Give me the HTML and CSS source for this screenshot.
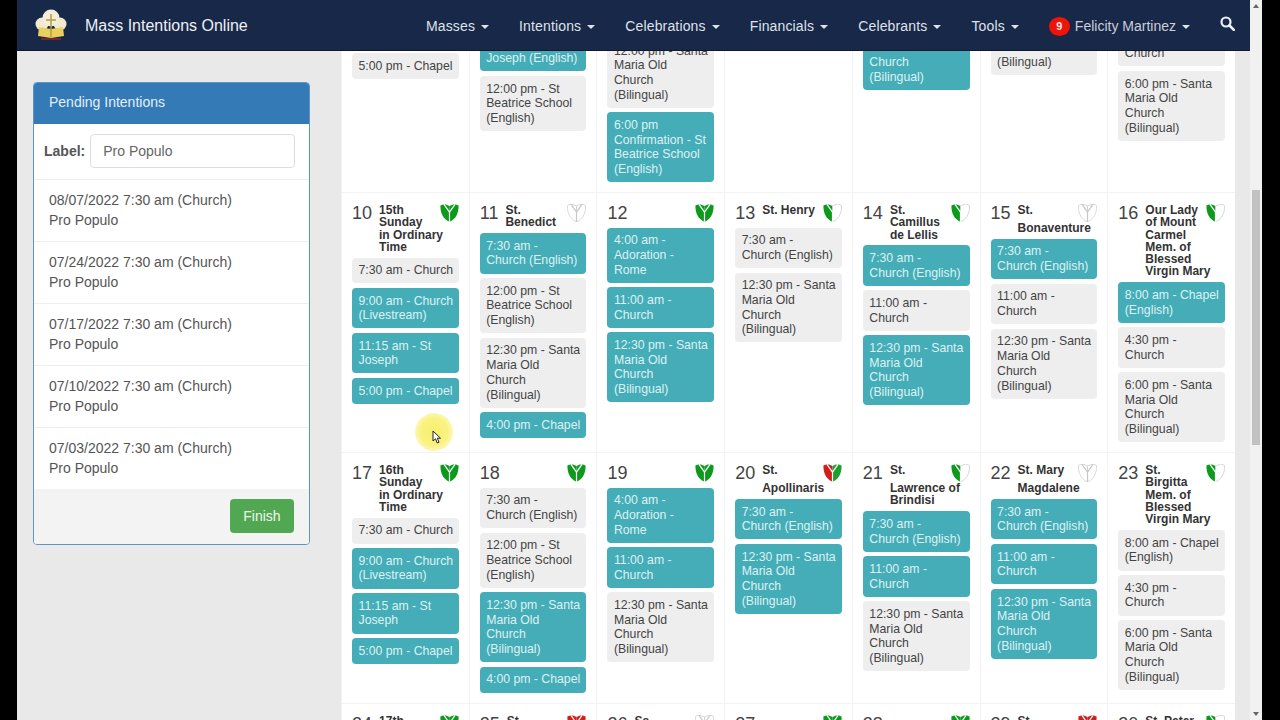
FILE: index.html
```html
<!DOCTYPE html>
<html lang="en">
<head>
    <meta charset="UTF-8">
    <title>Mass Intentions Online</title>
    <link rel="stylesheet" href="styles.css">
</head>
<body>

    <svg class="defs" width="0" height="0">
        <symbol id="vest" viewBox="0 0 19 18">
            <path class="vest-left" d="M9.500 2L6 .6C4 .2 2 .4.400 1.600.200 9.500 3.500 15.500 9.500 17.800z"/>
            <path class="vest-right" d="M9.500 2L13 .6c2-.4 4-.2 5.600 1 .2 7.900-3.100 13.900-9.100 16.200z"/>
            <path class="vest-line" d="M4 .4l5.500 7.800L15 .4M9.500 8.200v9.600"/>
        </symbol>
    </svg>

    <div class="page">
        <!-- Navbar -->
        <header class="navbar">
            <svg class="logo" viewBox="0 0 32 32">
                <circle cx="7" cy="15" r="6.500" fill="#f1ead0"/>
                <circle cx="25" cy="15" r="6.500" fill="#f1ead0"/>
                <circle cx="16" cy="9" r="8.500" fill="#f4eed8"/>
                <path d="M4 18l12 2 12-2 1 9-13 2-13-2z" fill="#e9cf5e"/>
                <path d="M16 5v23M11 11h10" stroke="#b89a45" stroke-width="1.500"/>
                <path d="M6 30h20" stroke="#8e2a2a" stroke-width="1.500"/>
            </svg>
            <div class="brand">Mass Intentions Online</div>
            <nav class="nav-links">
                <a href="#">Masses<span class="caret"></span></a>
                <a href="#">Intentions<span class="caret"></span></a>
                <a href="#">Celebrations<span class="caret"></span></a>
                <a href="#">Financials<span class="caret"></span></a>
                <a href="#">Celebrants<span class="caret"></span></a>
                <a href="#">Tools<span class="caret"></span></a>
                <a href="#" class="user-link"><span class="badge">9</span>Felicity Martinez<span class="caret"></span></a>
            </nav>
            <svg class="search" viewBox="0 0 15 15">
                <circle cx="6" cy="6" r="4.500" fill="none" stroke="#eef0f4" stroke-width="2.200"/>
                <path d="M9.500 9.500l4.300 4.300" stroke="#eef0f4" stroke-width="2.600" stroke-linecap="round"/>
            </svg>
        </header>

        <div class="main">
            <!-- Pending Intentions -->
            <aside class="sidebar">
                <div class="panel">
                    <div class="panel-heading">Pending Intentions</div>
                    <div class="label-row">
                        <label>Label:</label>
                        <input type="text" value="Pro Populo">
                    </div>
                    <div class="intention">08/07/2022 7:30 am (Church)<br>Pro Populo</div>
                    <div class="intention">07/24/2022 7:30 am (Church)<br>Pro Populo</div>
                    <div class="intention">07/17/2022 7:30 am (Church)<br>Pro Populo</div>
                    <div class="intention">07/10/2022 7:30 am (Church)<br>Pro Populo</div>
                    <div class="intention">07/03/2022 7:30 am (Church)<br>Pro Populo</div>
                    <div class="panel-footer">
                        <button class="btn-finish">Finish</button>
                    </div>
                </div>
            </aside>

            <!-- Calendar -->
            <div class="calendar">
                <!-- Week scrolled under the navbar -->
                <div class="day day-cut start-53">
                    <div class="event grey">5:00 pm - Chapel</div>
                </div>
                <div class="day day-cut start-31">
                    <div class="event teal">11:15 am - St<br>Joseph&nbsp;(English)</div>
                    <div class="event grey">12:00 pm - St Beatrice School (English)</div>
                </div>
                <div class="day day-cut start-38">
                    <div class="event grey">12:00 pm - Santa Maria Old<br>Church (Bilingual)</div>
                    <div class="event teal">6:00 pm<br>Confirmation - St Beatrice School (English)</div>
                </div>
                <div class="day day-cut"></div>
                <div class="day day-cut start-20">
                    <div class="event teal">12:30 pm - Santa Maria Old<br>Church (Bilingual)</div>
                </div>
                <div class="day day-cut start-5">
                    <div class="event grey">12:30 pm - Santa Maria Old<br>Church (Bilingual)</div>
                </div>
                <div class="day day-cut start-26">
                    <div class="event grey">4:30 pm -<br>Church</div>
                    <div class="event grey">6:00 pm - Santa Maria Old<br>Church (Bilingual)</div>
                </div>

                <!-- Week of the 10th -->
                <div class="day">
                    <div class="day-head"><span class="num">10</span><div class="title"><svg class="vest green"><use href="#vest"/></svg>15th Sunday in Ordinary Time</div></div>
                    <div class="event grey">7:30 am - Church</div>
                    <div class="event teal">9:00 am - Church (Livestream)</div>
                    <div class="event teal">11:15 am - St Joseph</div>
                    <div class="event teal">5:00 pm - Chapel</div>
                </div>
                <div class="day">
                    <div class="day-head"><span class="num">11</span><div class="title"><svg class="vest white"><use href="#vest"/></svg>St. Benedict</div></div>
                    <div class="event teal">7:30 am -<br>Church&nbsp;(English)</div>
                    <div class="event grey">12:00 pm - St Beatrice School (English)</div>
                    <div class="event grey">12:30 pm - Santa Maria Old<br>Church (Bilingual)</div>
                    <div class="event teal">4:00 pm - Chapel</div>
                </div>
                <div class="day">
                    <div class="day-head"><span class="num">12</span><div class="title"><svg class="vest green"><use href="#vest"/></svg></div></div>
                    <div class="event teal">4:00 am -<br>Adoration -<br>Rome</div>
                    <div class="event teal">11:00 am - Church</div>
                    <div class="event teal">12:30 pm - Santa Maria Old<br>Church (Bilingual)</div>
                </div>
                <div class="day">
                    <div class="day-head"><span class="num">13</span><div class="title"><svg class="vest half"><use href="#vest"/></svg>St. Henry</div></div>
                    <div class="event grey">7:30 am -<br>Church&nbsp;(English)</div>
                    <div class="event grey">12:30 pm - Santa Maria Old<br>Church (Bilingual)</div>
                </div>
                <div class="day">
                    <div class="day-head"><span class="num">14</span><div class="title"><svg class="vest half"><use href="#vest"/></svg>St. Camillus de Lellis</div></div>
                    <div class="event teal">7:30 am -<br>Church&nbsp;(English)</div>
                    <div class="event grey">11:00 am - Church</div>
                    <div class="event teal">12:30 pm - Santa Maria Old<br>Church (Bilingual)</div>
                </div>
                <div class="day">
                    <div class="day-head"><span class="num">15</span><div class="title"><svg class="vest white"><use href="#vest"/></svg>St. Bonaventure</div></div>
                    <div class="event teal">7:30 am -<br>Church&nbsp;(English)</div>
                    <div class="event grey">11:00 am - Church</div>
                    <div class="event grey">12:30 pm - Santa Maria Old<br>Church (Bilingual)</div>
                </div>
                <div class="day">
                    <div class="day-head"><span class="num">16</span><div class="title"><svg class="vest half"><use href="#vest"/></svg>Our Lady of Mount Carmel Mem. of Blessed Virgin Mary</div></div>
                    <div class="event teal">8:00 am - Chapel (English)</div>
                    <div class="event grey">4:30 pm -<br>Church</div>
                    <div class="event grey">6:00 pm - Santa Maria Old<br>Church (Bilingual)</div>
                </div>

                <!-- Week of the 17th -->
                <div class="day">
                    <div class="day-head"><span class="num">17</span><div class="title"><svg class="vest green"><use href="#vest"/></svg>16th Sunday in Ordinary Time</div></div>
                    <div class="event grey">7:30 am - Church</div>
                    <div class="event teal">9:00 am - Church (Livestream)</div>
                    <div class="event teal">11:15 am - St Joseph</div>
                    <div class="event teal">5:00 pm - Chapel</div>
                </div>
                <div class="day">
                    <div class="day-head"><span class="num">18</span><div class="title"><svg class="vest green"><use href="#vest"/></svg></div></div>
                    <div class="event grey">7:30 am -<br>Church&nbsp;(English)</div>
                    <div class="event grey">12:00 pm - St Beatrice School (English)</div>
                    <div class="event teal">12:30 pm - Santa Maria Old<br>Church (Bilingual)</div>
                    <div class="event teal">4:00 pm - Chapel</div>
                </div>
                <div class="day">
                    <div class="day-head"><span class="num">19</span><div class="title"><svg class="vest green"><use href="#vest"/></svg></div></div>
                    <div class="event teal">4:00 am -<br>Adoration -<br>Rome</div>
                    <div class="event teal">11:00 am - Church</div>
                    <div class="event grey">12:30 pm - Santa Maria Old<br>Church (Bilingual)</div>
                </div>
                <div class="day">
                    <div class="day-head"><span class="num">20</span><div class="title"><svg class="vest redgreen"><use href="#vest"/></svg>St. Apollinaris</div></div>
                    <div class="event teal">7:30 am -<br>Church&nbsp;(English)</div>
                    <div class="event teal">12:30 pm - Santa Maria Old<br>Church (Bilingual)</div>
                </div>
                <div class="day">
                    <div class="day-head"><span class="num">21</span><div class="title"><svg class="vest half"><use href="#vest"/></svg>St. Lawrence of Brindisi</div></div>
                    <div class="event teal">7:30 am -<br>Church&nbsp;(English)</div>
                    <div class="event teal">11:00 am - Church</div>
                    <div class="event grey">12:30 pm - Santa Maria Old<br>Church (Bilingual)</div>
                </div>
                <div class="day">
                    <div class="day-head"><span class="num">22</span><div class="title"><svg class="vest white"><use href="#vest"/></svg>St. Mary Magdalene</div></div>
                    <div class="event teal">7:30 am -<br>Church&nbsp;(English)</div>
                    <div class="event teal">11:00 am - Church</div>
                    <div class="event teal">12:30 pm - Santa Maria Old<br>Church (Bilingual)</div>
                </div>
                <div class="day">
                    <div class="day-head"><span class="num">23</span><div class="title"><svg class="vest half"><use href="#vest"/></svg>St. Birgitta Mem. of Blessed Virgin Mary</div></div>
                    <div class="event grey">8:00 am - Chapel (English)</div>
                    <div class="event grey">4:30 pm -<br>Church</div>
                    <div class="event grey">6:00 pm - Santa Maria Old<br>Church (Bilingual)</div>
                </div>

                <!-- Week of the 24th, only its first line shows -->
                <div class="day">
                    <div class="day-head"><span class="num">24</span><div class="title"><svg class="vest green"><use href="#vest"/></svg>17th Sunday in Ordinary Time</div></div>
                </div>
                <div class="day">
                    <div class="day-head"><span class="num">25</span><div class="title"><svg class="vest red"><use href="#vest"/></svg>St. James</div></div>
                </div>
                <div class="day">
                    <div class="day-head"><span class="num">26</span><div class="title"><svg class="vest white"><use href="#vest"/></svg>Ss. Joachim and Anne</div></div>
                </div>
                <div class="day">
                    <div class="day-head"><span class="num">27</span><div class="title"><svg class="vest green"><use href="#vest"/></svg></div></div>
                </div>
                <div class="day">
                    <div class="day-head"><span class="num">28</span><div class="title"><svg class="vest green"><use href="#vest"/></svg></div></div>
                </div>
                <div class="day">
                    <div class="day-head"><span class="num">29</span><div class="title"><svg class="vest red"><use href="#vest"/></svg>St. Martha</div></div>
                </div>
                <div class="day">
                    <div class="day-head"><span class="num">30</span><div class="title"><svg class="vest half"><use href="#vest"/></svg>St. Peter Chrysologus</div></div>
                </div>
            </div>
        </div>

        <!-- Mouse highlight from the screen recording -->
        <div class="mouse-glow">
            <svg class="mouse-arrow" viewBox="0 0 10 14">
                <path d="M1 1v10l2.500-2.200L5.200 13l1.800-.8-1.700-4H8.500z" fill="#fff" stroke="#222" stroke-width="1"/>
            </svg>
        </div>
    </div>

    <div class="scrollbar">
        <span class="arrow-up"></span>
        <div class="thumb"></div>
        <span class="arrow-down"></span>
    </div>

</body>
</html>
```

FILE: styles.css
```css
/* Reset and Basic Styles */
* {
    margin: 0;
    padding: 0;
    box-sizing: border-box;
}
html, body {
    height: 720px;
    overflow: hidden;
}
body {
    font-family: "Liberation Sans", Arial, sans-serif;
    font-size: 14px;
    background-color: #000;
    color: #555;
    display: flex;
    padding: 0 18px 0 17px;
}
.defs {
    position: absolute;
}

.page {
    position: relative;
    width: 1233px;
    height: 720px;
    background-color: #e9e9e9;
    overflow: hidden;
}

/* Navbar */
.navbar {
    position: absolute;
    top: 0;
    left: 0;
    width: 100%;
    height: 51px;
    display: flex;
    align-items: center;
    padding: 2px 15px 0 18px;
    background-color: #182848;
    border-bottom: 1px solid #10192b;
    z-index: 10;
}
.logo {
    width: 32px;
    height: 32px;
    margin-top: -3px;
}
.brand {
    margin-left: 18px;
    font-size: 16px;
    color: #eef0f4;
}
.nav-links {
    display: flex;
    margin-left: auto;
}
.nav-links a {
    display: flex;
    align-items: center;
    padding: 0 15px;
    color: #dfe2e8;
    letter-spacing: .15px;
    text-decoration: none;
    white-space: nowrap;
}
.caret {
    width: 0;
    height: 0;
    margin-left: 6px;
    margin-top: 2px;
    border-top: 4px solid #dfe2e8;
    border-left: 4px solid transparent;
    border-right: 4px solid transparent;
}
.badge {
    width: 21px;
    height: 19px;
    margin-right: 5px;
    border-radius: 50%;
    background-color: #f01408;
    color: #f4e8e8;
    font-size: 11px;
    font-weight: bold;
    line-height: 19px;
    text-align: center;
}
.nav-links .user-link {
    color: #c9ced8;
    letter-spacing: 0;
}
.search {
    width: 15px;
    height: 15px;
    margin-left: 15px;
    margin-bottom: 5px;
}

/* Layout */
.main {
    display: flex;
    align-items: flex-start;
}
.sidebar {
    width: 324px;
    padding: 82px 31px 0 16px;
}

/* Pending panel */
.panel {
    background-color: #fff;
    border: 1px solid #5f95c4;
    border-radius: 4px;
    overflow: hidden;
}
.panel-heading {
    height: 41px;
    padding: 0 15px;
    line-height: 39px;
    background-color: #337ab7;
    color: #e6eff7;
}
.label-row {
    display: flex;
    align-items: center;
    gap: 5px;
    height: 55px;
    padding: 0 14px 2px 10px;
}
.label-row label {
    font-weight: bold;
}
.label-row input {
    flex: 1;
    min-width: 0;
    height: 34px;
    padding: 0 12px;
    border: 1px solid #ddd;
    border-radius: 4px;
    font-family: inherit;
    font-size: 14px;
    color: #666;
}
.intention {
    padding: 10px 15px 11px;
    line-height: 20px;
    border-top: 1px solid #eee;
}
.panel-footer {
    display: flex;
    justify-content: flex-end;
    height: 55px;
    padding: 10px 15px 0;
    background-color: #f3f3f3;
}
.btn-finish {
    width: 64px;
    height: 34px;
    border: none;
    border-radius: 4px;
    background-color: #52a852;
    color: #eef7ee;
    font-family: inherit;
    font-size: 14px;
}

/* Calendar */
.calendar {
    width: 894px;
    display: grid;
    grid-template-columns: repeat(7, 1fr);
    background-color: #fff;
}
.day {
    display: flex;
    flex-direction: column;
    gap: 4.600px;
    min-width: 0;
    padding: 10px;
    border-left: 1px solid #f3f3f3;
    border-bottom: 1px solid #f3f3f3;
}
.day-cut {
    height: 193px;
    padding-top: 0;
}
.start-5 { padding-top: 5px; }
.start-20 { padding-top: 20px; }
.start-26 { padding-top: 26px; }
.start-31 { padding-top: 31px; }
.start-38 { padding-top: 38px; }
.start-53 { padding-top: 53px; }

.day-head {
    display: flex;
    gap: 7px;
    min-height: 20px;
}
.num {
    font-size: 18px;
    line-height: 20px;
    color: #444;
}
.title {
    flex: 1;
    min-width: 0;
    padding: 1px 6px 0 0;
    font-size: 12px;
    font-weight: bold;
    line-height: 12.300px;
    color: #333;
}
/* icon hangs into the title's right padding */
.vest {
    float: right;
    width: 19px;
    height: 18px;
    margin: 0 -6px 0 7px;
}
.vest-left {
    fill: var(--left);
    stroke: var(--edge-left, none);
    stroke-width: .7;
}
.vest-right {
    fill: var(--right);
    stroke: var(--edge-right, none);
    stroke-width: .7;
}
.vest-line {
    fill: none;
    stroke: var(--line, #fff);
    stroke-width: 1.200;
}
.green { --left: #0c9a1c; --right: #0c9a1c; }
.red { --left: #d0201c; --right: #d0201c; }
.redgreen { --left: #d0201c; --right: #1f9e2c; }
.half { --left: #0c9a1c; --right: #fff; --edge-right: #c4c4c4; }
.white { --left: #fff; --right: #fff; --edge-left: #c8c8c8; --edge-right: #c8c8c8; --line: #c8c8c8; }

.event {
    padding: 5.500px 4.500px 5.500px 6.500px;
    border-radius: 4px;
    font-size: 12.250px;
    line-height: 14.700px;
}
.teal {
    background-color: #45adb8;
    color: #def1f3;
}
.grey {
    background-color: #eee;
    color: #444;
}

/* Mouse highlight */
.mouse-glow {
    position: absolute;
    left: 398px;
    top: 413px;
    width: 38px;
    height: 38px;
    border-radius: 50%;
    background: radial-gradient(circle, #f8f06c 0, #f9f280 50%, rgba(251, 245, 160, 0) 100%);
}
.mouse-arrow {
    position: absolute;
    left: 17px;
    top: 17px;
    width: 10px;
    height: 14px;
}

/* Scrollbar */
.scrollbar {
    position: relative;
    width: 12px;
    height: 720px;
    background-color: #f1f1f1;
    display: flex;
    flex-direction: column;
    align-items: center;
    padding-top: 4px;
}
.arrow-up {
    width: 0;
    height: 0;
    border-bottom: 4px solid #666;
    border-left: 3px solid transparent;
    border-right: 3px solid transparent;
}
.thumb {
    width: 8px;
    height: 255px;
    margin-top: 182px;
    background-color: #c1c1c1;
}
.arrow-down {
    width: 0;
    height: 0;
    margin-top: auto;
    margin-bottom: 4px;
    border-top: 4px solid #666;
    border-left: 3px solid transparent;
    border-right: 3px solid transparent;
}
```
